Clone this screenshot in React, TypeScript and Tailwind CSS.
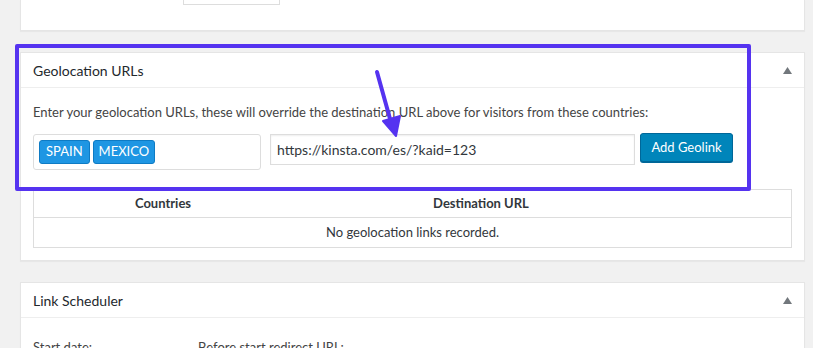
import React from 'react';

const font = { fontFamily: 'Lato, "Open Sans", sans-serif' };

const Triangle: React.FC = () => (
  <svg width="9" height="7" viewBox="0 0 9 7" className="text-[#72777c]">
    <path d="M4.5 0 L9 7 L0 7 Z" fill="currentColor" />
  </svg>
);

const Card: React.FC<{ title?: string; children: React.ReactNode; className?: string }> = ({ title, children, className }) => (
  <div className={`bg-white border border-[#e5e5e5] shadow-[0_1px_1px_rgba(0,0,0,0.04)] ${className ?? ''}`}>
    {title && (
      <div className="flex items-center justify-between h-[35px] px-3 border-b border-[#eeeeee]">
        <h2 className="text-[14px] text-[#23282d]">{title}</h2>
        <Triangle />
      </div>
    )}
    {children}
  </div>
);

const App: React.FC = () => {
  return (
    <div className="relative w-[813px] h-[348px] overflow-hidden bg-[#f1f1f1] pl-5 pr-2" style={font}>
      {/* top card, cut off by the window */}
      <div className="bg-white border-x border-b border-[#e5e5e5] h-[31px] shadow-[0_1px_1px_rgba(0,0,0,0.04)]">
        <div className="ml-[162px] w-[97px] h-[5px] border-x border-b border-[#dddddd]" />
      </div>

      <Card title="Geolocation URLs" className="mt-[21px]">
        <div className="px-3 pt-[15px] pb-3">
          <p className="text-[13px] text-[#444444] leading-[18px]">
            Enter your geolocation URLs, these will override the destination URL above for visitors from these countries:
          </p>
          <div className="flex items-start gap-2 mt-[13px]">
            <div className="w-[228px] h-[36px] border border-[#dddddd] rounded-[3px] flex items-center gap-[3px] px-[5px]">
              <span className="h-[24px] px-[6px] flex items-center text-[13px] text-white bg-[#1e96e3] border border-[#0e7bc4] rounded-[3px]">SPAIN</span>
              <span className="h-[24px] px-[5px] flex items-center text-[13px] text-white bg-[#1e96e3] border border-[#0e7bc4] rounded-[3px]">MEXICO</span>
            </div>
            <div className="ml-[1px] w-[365px] h-[31px] border border-[#dddddd] flex items-center px-[6px] text-[14px] text-[#32373c] shadow-[inset_0_1px_2px_rgba(0,0,0,0.07)]">
              https://kinsta.com/es/?kaid=123
            </div>
            <button className="-mt-[1px] ml-[-3px] w-[93px] h-[29px] rounded-[3px] bg-[#0085ba] border border-[#006799] text-white text-[13px] shadow-[0_1px_0_#006799]">
              Add Geolink
            </button>
          </div>

          <div className="mt-[19px] border border-[#dddddd] text-[13px] text-[#32373c]">
            <div className="grid grid-cols-[258px_378px_1fr] h-[28px] items-center border-b border-[#dddddd] font-bold">
              <div className="text-center">Countries</div>
              <div className="text-center">Destination URL</div>
              <div />
            </div>
            <div className="h-[29px] flex items-center justify-center">No geolocation links recorded.</div>
          </div>
        </div>
      </Card>

      <Card title="Link Scheduler" className="mt-[21px]">
        <div className="px-3 pt-[20px] flex text-[13px] text-[#444444]">
          <span className="w-[165px]">Start date:</span>
          <span>Before start redirect URL:</span>
        </div>
      </Card>

      {/* highlight overlay */}
      <div className="absolute left-[15px] top-[44px] w-[736px] h-[147px] border-[4px] border-[#5533f0] rounded-[2px] pointer-events-none" />
      <svg className="absolute left-[366px] top-[66px] pointer-events-none" width="40" height="76" viewBox="0 0 40 76">
        <path d="M11 6 L26 60" stroke="#5533f0" strokeWidth="4" strokeLinecap="round" fill="none" />
        <path d="M17 55 L30 70 L34 50 Z" fill="#5533f0" stroke="#5533f0" strokeWidth="2" strokeLinejoin="round" />
      </svg>
    </div>
  );
};

export default App;
